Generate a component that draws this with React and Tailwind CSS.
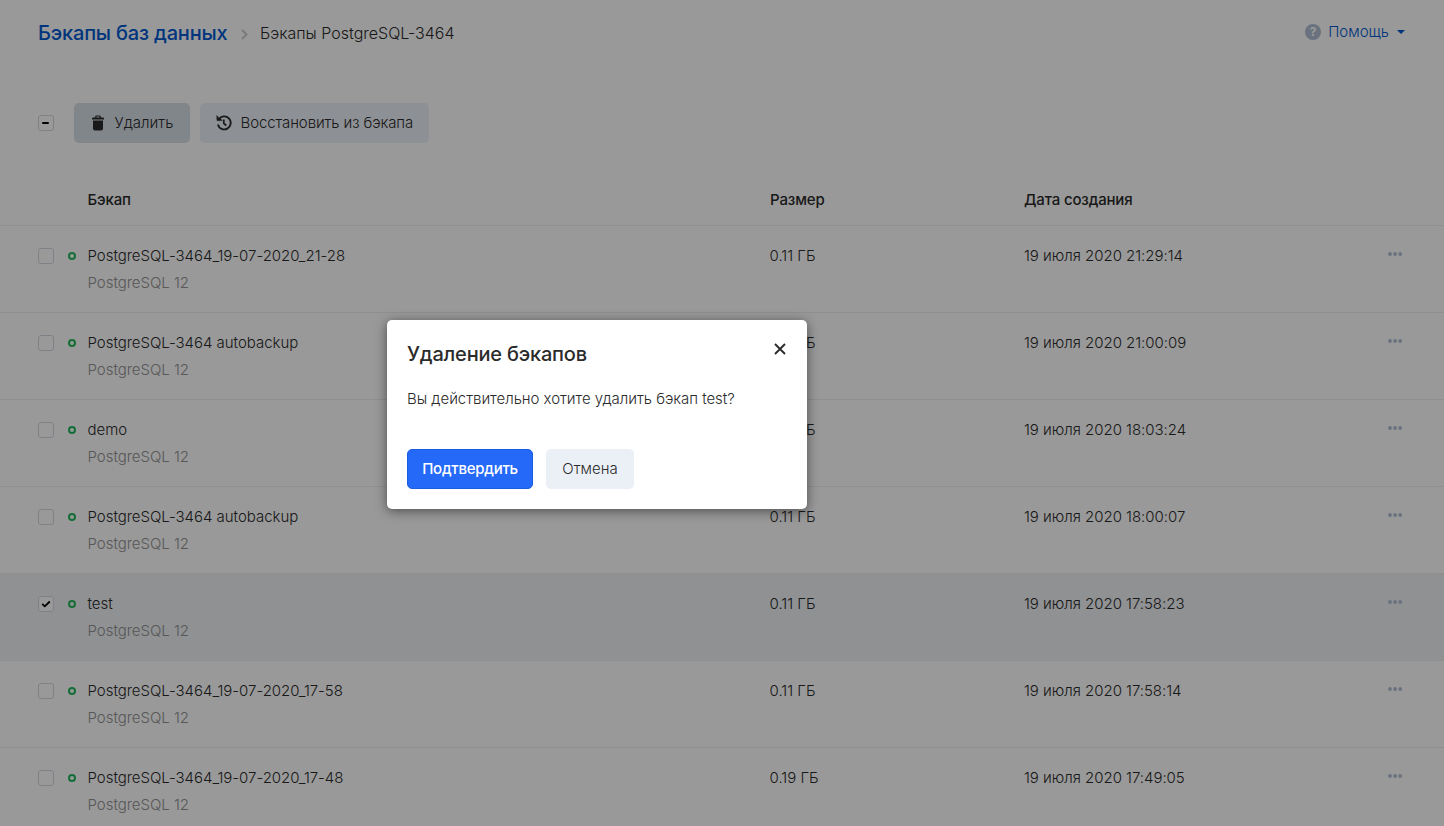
import React from 'react';

const backups = [
  { name: 'PostgreSQL-3464_19-07-2020_21-28', size: '0.11 ГБ', date: '19 июля 2020 21:29:14' },
  { name: 'PostgreSQL-3464 autobackup', size: '0.11 ГБ', date: '19 июля 2020 21:00:09' },
  { name: 'demo', size: '0.11 ГБ', date: '19 июля 2020 18:03:24' },
  { name: 'PostgreSQL-3464 autobackup', size: '0.11 ГБ', date: '19 июля 2020 18:00:07' },
  { name: 'test', size: '0.11 ГБ', date: '19 июля 2020 17:58:23', selected: true },
  { name: 'PostgreSQL-3464_19-07-2020_17-58', size: '0.11 ГБ', date: '19 июля 2020 17:58:14' },
  { name: 'PostgreSQL-3464_19-07-2020_17-48', size: '0.19 ГБ', date: '19 июля 2020 17:49:05' },
];

function Checkbox({ state }) {
  return (
    <span className="flex size-4 shrink-0 items-center justify-center rounded-[3px] border border-[#d6d8e2] bg-white">
      {state === 'checked' && (
        <svg width="10" height="8" viewBox="0 0 10 8" fill="none" stroke="#000" strokeWidth="1.8">
          <path d="M1.2 3.9 3.8 6.3 8.8 1.5" />
        </svg>
      )}
      {state === 'mixed' && <span className="mr-px h-0.5 w-[7px] rounded-sm bg-black" />}
    </span>
  );
}

function TrashIcon() {
  return (
    <svg width="12" height="16" viewBox="0 0 12 16" fill="#2b2b2b">
      <path fillRule="evenodd" d="M3.2 2.6V1.6Q3.2.4 4.4.4H7.6Q8.8.4 8.8 1.6V2.6H11Q12 2.6 12 3.5V4.4H0V3.5Q0 2.6 1 2.6ZM4.5 2.6H7.5V1.6H4.5Z" />
      <path d="M1 5.4H11V13.4Q11 15.4 9 15.4H3Q1 15.4 1 13.4Z" />
    </svg>
  );
}

function RestoreIcon() {
  return (
    <svg width="16" height="16" viewBox="0 0 16 16" fill="none" stroke="#2b2b2b" strokeWidth="1.9">
      <path d="M2.7 4.4A6.5 6.5 0 1 1 1.9 9.4" />
      <path d="M.8.6 1 5.6H6.1L4.4 3.6 2.6 2.8Z" fill="#2b2b2b" stroke="#2b2b2b" strokeWidth=".6" />
      <path d="M7.8 4.6V8.3L10.3 10.5" strokeWidth="1.7" />
    </svg>
  );
}

function Row({ backup }) {
  return (
    <div className={`flex h-[87px] border-b border-[#eeeff0] pl-[38px] pt-4 ${backup.selected ? 'bg-[#eff2f6]' : ''}`}>
      <div className="flex h-[27px] w-[49.5px] items-center">
        <Checkbox state={backup.selected ? 'checked' : 'empty'} />
        <span className="ml-[14px] size-2 rounded-full border-2 border-[#24b85b]" />
      </div>
      <div className="w-[682px] leading-[27px] tracking-[-0.03px]">
        <div>{backup.name}</div>
        <div className="text-[#939393]">PostgreSQL 12</div>
      </div>
      <div className="w-[254.5px] leading-[27px]">{backup.size}</div>
      <div className="w-[364px] leading-[27px] tracking-[-0.03px]">{backup.date}</div>
      <svg className="mt-[10px]" width="15" height="4" viewBox="0 0 15 4" fill="#b0bfd2">
        <circle cx="2" cy="2" r="1.9" />
        <circle cx="7.1" cy="2" r="1.9" />
        <circle cx="12.2" cy="2" r="1.9" />
      </svg>
    </div>
  );
}

export default function App() {
  return (
    <div className="relative h-[826px] w-[1444px] overflow-hidden bg-white font-['Inter',sans-serif] text-[15px] font-light text-[#2b2b2b]">
      <header className="flex h-[66px] items-center justify-between pl-[38px] pr-[39px]">
        <div className="flex items-center">
          <a className="w-[190px] whitespace-nowrap text-[20px] font-medium tracking-[-0.18px] text-[#0059d0]">Бэкапы баз данных</a>
          <svg className="ml-[13px] mt-[3px]" width="7" height="11" viewBox="0 0 7 11" fill="none" stroke="#c5c8cc" strokeWidth="1.8">
            <path d="M1 .8 5.6 5.5 1 10.2" />
          </svg>
          <span className="-mt-px ml-3 text-base">Бэкапы PostgreSQL-3464</span>
        </div>
        <div className="-mt-0.5 flex items-center text-[#0059d0]">
          <span className="flex size-4 items-center justify-center rounded-full bg-[#b0bfd2] text-[12px] font-bold text-white">?</span>
          <span className="ml-[7px]">Помощь</span>
          <svg className="ml-2" width="8" height="4" viewBox="0 0 8 4" fill="#0059d0">
            <path d="M0 0H8L4 4Z" />
          </svg>
        </div>
      </header>

      <div className="mt-[37px] flex h-10 items-center pl-[38px]">
        <Checkbox state="mixed" />
        <button className="ml-5 flex h-10 w-[116px] items-center rounded-[5px] bg-[#d8dfe7] pl-[18px]">
          <TrashIcon />
          <span className="ml-[10.5px]">Удалить</span>
        </button>
        <button className="ml-[10px] flex h-10 w-[229px] items-center rounded-[5px] bg-[#ebf0f7] pl-4">
          <RestoreIcon />
          <span className="ml-[8.5px] whitespace-nowrap tracking-[-0.1px]">Восстановить из бэкапа</span>
        </button>
      </div>

      <div className="mt-[30px] flex h-[53px] items-center border-b border-[#eeeff0] pl-[87.5px] pt-0.5 font-medium tracking-[-0.16px]">
        <div className="w-[682.5px]">Бэкап</div>
        <div className="w-[254px]">Размер</div>
        <div>Дата создания</div>
      </div>

      {backups.map((backup, i) => (
        <Row key={i} backup={backup} />
      ))}

      <div className="absolute inset-0 bg-black/40">
        <div className="absolute left-[387px] top-[320px] h-[189px] w-[420px] rounded-[5px] bg-white px-5 pt-5 shadow-[0_2px_12px_rgba(0,0,0,0.5)]">
          <div className="flex justify-between">
            <h2 className="text-[20px] font-medium leading-7 tracking-[-0.2px]">Удаление бэкапов</h2>
            <svg className="mr-[1.5px] mt-[2.5px]" width="12" height="12" viewBox="0 0 12 12" fill="none" stroke="#2b2b2b" strokeWidth="1.9">
              <path d="M1 1 11 11M11 1 1 11" />
            </svg>
          </div>
          <p className="mt-5 leading-[22px] tracking-[-0.03px]">Вы действительно хотите удалить бэкап test?</p>
          <div className="mt-[39px] flex gap-[13px]">
            <button className="h-10 w-[126px] rounded-[5px] border border-[#1d5de0] bg-[#2469f8] font-medium tracking-[-0.25px] text-white">Подтвердить</button>
            <button className="h-10 w-[88px] rounded-[5px] bg-[#ebf0f7]">Отмена</button>
          </div>
        </div>
      </div>
    </div>
  );
}
